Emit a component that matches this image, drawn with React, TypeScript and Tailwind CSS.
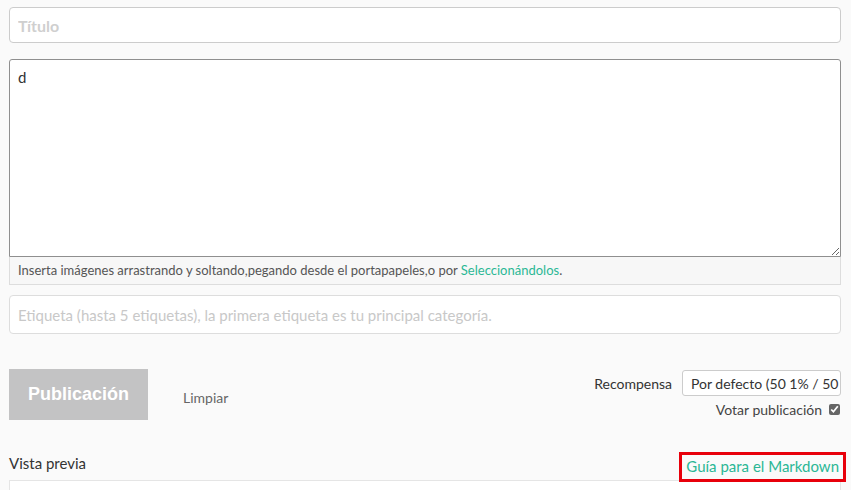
import { useState } from 'react'

const FONT = "font-['Lato','Noto_Sans',sans-serif]"

export default function App() {
  const [body, setBody] = useState('d')
  const [vote, setVote] = useState(true)

  return (
    <div className={`min-h-[490px] bg-[#fafafa] px-[9px] pt-[7px] text-[#333] ${FONT}`}>
      {/* título */}
      <input
        className="block h-[36px] w-[832px] rounded-[4px] border border-[#cccccc] bg-white px-[8px] text-[16px] font-bold outline-none placeholder:font-bold placeholder:text-[#cfcfcf]"
        placeholder="Título"
      />

      {/* editor */}
      <div className="mt-[16px] w-[832px]">
        <textarea
          value={body}
          onChange={(e) => setBody(e.target.value)}
          className="block h-[198px] w-full resize-y rounded-t-[3px] border border-[#8f8f8f] bg-white px-[8px] py-[6px] text-[15px] text-[#333] outline-none"
        />
        <div className="flex h-[28px] items-center border border-t-0 border-[#dddddd] bg-[#f7f7f7] px-[8px] text-[13px] text-[#555]">
          Inserta imágenes arrastrando y soltando,pegando desde el portapapeles,o por&nbsp;
          <span className="text-[#2bb795]">Seleccionándolos</span>.
        </div>
      </div>

      {/* etiquetas */}
      <input
        className="mt-[10px] block h-[39px] w-[832px] rounded-[4px] border border-[#dddddd] bg-white px-[8px] text-[15px] outline-none placeholder:text-[#c8c8c8]"
        placeholder="Etiqueta (hasta 5 etiquetas), la primera etiqueta es tu principal categoría."
      />

      {/* acciones */}
      <div className="mt-[35px] flex w-[832px] items-start">
        <button className="h-[51px] w-[139px] bg-[#c3c3c4] font-['Liberation_Sans',Arial,sans-serif] text-[18px] font-bold text-white">
          Publicación
        </button>
        <button className="ml-[35px] mt-[18px] text-[14px] text-[#666]">Limpiar</button>

        <div className="ml-auto flex flex-col items-end">
          <div className="mt-[1px] flex items-center">
            <span className="mr-[10px] text-[14px] text-[#333]">Recompensa</span>
            <select className="h-[26px] w-[159px] appearance-none rounded-[3px] border border-[#cccccc] bg-white pl-[8px] text-[14px] text-[#333] outline-none">
              <option>Por defecto (50 1% / 50 1%)</option>
            </select>
          </div>
          <label className="mt-[3px] flex items-center text-[14px] text-[#444]">
            Votar publicación
            <input
              type="checkbox"
              checked={vote}
              onChange={() => setVote(!vote)}
              className="ml-[7px] mr-[1px] h-[11px] w-[11px] accent-[#666]"
            />
          </label>
        </div>
      </div>

      {/* vista previa */}
      <div className="mt-[32px] flex w-[837px] items-end justify-between">
        <span className="mb-[7px] text-[15px] text-[#333]">Vista previa</span>
        <a className="border-[3px] border-[#e8000b] px-[4px] pb-[1px] text-[15px] text-[#2bb795]">
          Guía para el Markdown
        </a>
      </div>
      <div className="-mt-[2px] h-[20px] w-[832px] border border-[#e5e5e5] bg-white" />
    </div>
  )
}
